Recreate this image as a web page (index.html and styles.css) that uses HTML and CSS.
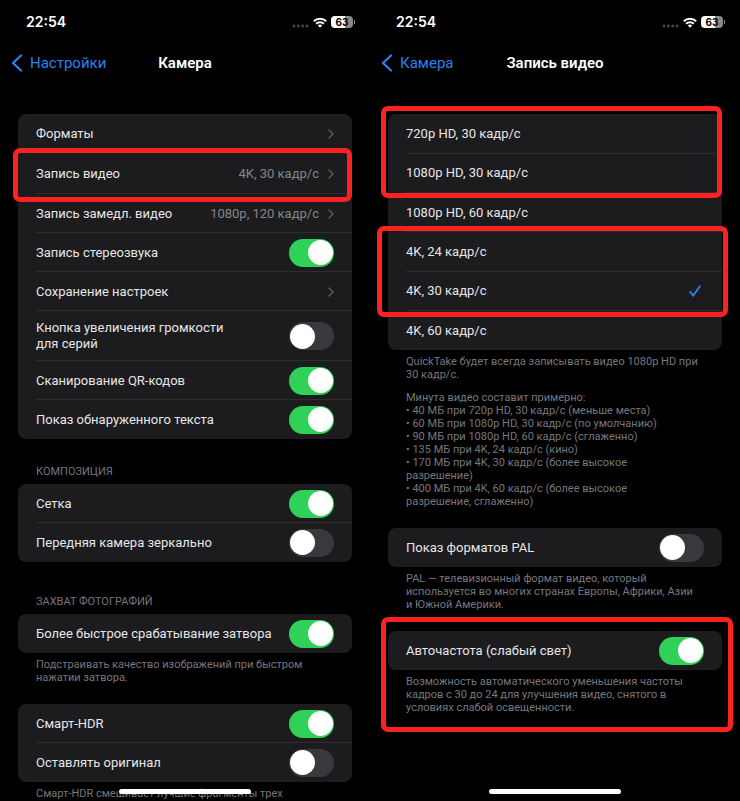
FILE: index.html
```html
<!doctype html>
<html lang="ru">
	<head>
		<title>Камера — Запись видео</title>
		<meta charset="utf-8">
		<meta name="viewport" content="width=device-width">
		<link rel="stylesheet" href="styles.css">
	</head>
	<body>
		<svg class="sprite" aria-hidden="true">
			<symbol id="back" viewBox="0 0 12 18">
				<path d="M10 1.500 2 9l8 7.500" fill="none" stroke="currentColor" stroke-width="2.200" stroke-linecap="round" stroke-linejoin="round"/>
			</symbol>
			<symbol id="chevron" viewBox="0 0 6 10">
				<path d="M1 1l4 4-4 4" fill="none" stroke="currentColor" stroke-width="1.500" stroke-linecap="round" stroke-linejoin="round"/>
			</symbol>
			<symbol id="check" viewBox="0 0 12 12">
				<path d="M1.200 6.800l3 4L10.800 1.200" fill="none" stroke="currentColor" stroke-width="1.900" stroke-linecap="round" stroke-linejoin="round"/>
			</symbol>
			<symbol id="dots" viewBox="0 0 17 4">
				<g fill="#4a4a4c">
					<circle cx="2" cy="2" r="1.400"/>
					<circle cx="6.300" cy="2" r="1.400"/>
					<circle cx="10.700" cy="2" r="1.400"/>
					<circle cx="15" cy="2" r="1.400"/>
				</g>
			</symbol>
			<symbol id="wifi" viewBox="0 0 14 11">
				<g fill="none" stroke="#fff" stroke-width="1.900">
					<path d="M.8 4.300a8.900 8.900 0 0 1 12.400 0"/>
					<path d="M3.100 6.800a5.600 5.600 0 0 1 7.800 0"/>
				</g>
				<path d="M7 10.700 4.800 8.500a3.100 3.100 0 0 1 4.400 0z" fill="#fff"/>
			</symbol>
		</svg>

		<main class="screens">
			<section class="screen">
				<div class="status">
					<time>22:54</time>
					<div class="status-icons">
						<svg class="dots"><use href="#dots"/></svg>
						<svg class="wifi"><use href="#wifi"/></svg>
						<span class="battery">63</span>
					</div>
				</div>
				<nav class="nav">
					<a class="back" href="#"><svg><use href="#back"/></svg>Настройки</a>
					<h1>Камера</h1>
				</nav>

				<div class="content">
					<div class="group">
						<div class="card card-main">
							<a class="row" href="#">Форматы <svg class="chevron"><use href="#chevron"/></svg></a>
							<div class="marked mark-video">
								<a class="row" href="#">Запись видео <span class="value">4K, 30 кадр/с</span><svg class="chevron"><use href="#chevron"/></svg></a>
							</div>
							<a class="row" href="#">Запись замедл. видео <span class="value">1080p, 120 кадр/с</span><svg class="chevron"><use href="#chevron"/></svg></a>
							<label class="row">Запись стереозвука <input class="switch" type="checkbox" checked></label>
							<a class="row" href="#">Сохранение настроек <svg class="chevron"><use href="#chevron"/></svg></a>
							<label class="row row-tall"><span>Кнопка увеличения громкости<br>для серий</span> <input class="switch" type="checkbox"></label>
							<label class="row">Сканирование QR-кодов <input class="switch" type="checkbox" checked></label>
							<label class="row">Показ обнаруженного текста <input class="switch" type="checkbox" checked></label>
						</div>
					</div>

					<div class="group">
						<h2>Композиция</h2>
						<div class="card">
							<label class="row">Сетка <input class="switch" type="checkbox" checked></label>
							<label class="row">Передняя камера зеркально <input class="switch" type="checkbox"></label>
						</div>
					</div>

					<div class="group group-photo">
						<h2>Захват фотографий</h2>
						<div class="card">
							<label class="row">Более быстрое срабатывание затвора <input class="switch" type="checkbox" checked></label>
						</div>
						<div class="note">
							<p>Подстраивать качество изображений при быстром<br>нажатии затвора.</p>
						</div>
					</div>

					<div class="group">
						<div class="card">
							<label class="row">Смарт-HDR <input class="switch" type="checkbox" checked></label>
							<label class="row">Оставлять оригинал <input class="switch" type="checkbox"></label>
						</div>
						<div class="note">
							<p>Смарт-HDR смешивает лучшие фрагменты трех</p>
						</div>
					</div>
				</div>
				<div class="home"></div>
			</section>

			<section class="screen">
				<div class="status">
					<time>22:54</time>
					<div class="status-icons">
						<svg class="dots"><use href="#dots"/></svg>
						<svg class="wifi"><use href="#wifi"/></svg>
						<span class="battery">63</span>
					</div>
				</div>
				<nav class="nav">
					<a class="back" href="#"><svg><use href="#back"/></svg>Камера</a>
					<h1>Запись видео</h1>
				</nav>

				<div class="content">
					<div class="group">
						<div class="card card-modes">
							<div class="marked mark-hd">
								<label class="row">720p HD, 30 кадр/с <input type="radio" name="mode"><svg class="check"><use href="#check"/></svg></label>
								<label class="row">1080p HD, 30 кадр/с <input type="radio" name="mode"><svg class="check"><use href="#check"/></svg></label>
							</div>
							<label class="row">1080p HD, 60 кадр/с <input type="radio" name="mode"><svg class="check"><use href="#check"/></svg></label>
							<div class="marked mark-4k">
								<label class="row">4K, 24 кадр/с <input type="radio" name="mode"><svg class="check"><use href="#check"/></svg></label>
								<label class="row">4K, 30 кадр/с <input type="radio" name="mode" checked><svg class="check"><use href="#check"/></svg></label>
							</div>
							<label class="row">4K, 60 кадр/с <input type="radio" name="mode"><svg class="check"><use href="#check"/></svg></label>
						</div>
						<div class="note">
							<p>QuickTake будет всегда записывать видео 1080p HD при<br>30 кадр/с.</p>
							<p>Минута видео составит примерно:</p>
							<ul>
								<li>• 40 МБ при 720p HD, 30 кадр/с (меньше места)</li>
								<li>• 60 МБ при 1080p HD, 30 кадр/с (по умолчанию)</li>
								<li>• 90 МБ при 1080p HD, 60 кадр/с (сглаженно)</li>
								<li>• 135 МБ при 4K, 24 кадр/с (кино)</li>
								<li>• 170 МБ при 4K, 30 кадр/с (более высокое<br>разрешение)</li>
								<li>• 400 МБ при 4K, 60 кадр/с (более высокое<br>разрешение, сглаженно)</li>
							</ul>
						</div>
					</div>

					<div class="group">
						<div class="card">
							<label class="row">Показ форматов PAL <input class="switch" type="checkbox"></label>
						</div>
						<div class="note">
							<p>PAL — телевизионный формат видео, который<br>используется во многих странах Европы, Африки, Азии<br>и Южной Америки.</p>
						</div>
					</div>

					<div class="group marked mark-auto">
						<div class="card">
							<label class="row">Авточастота (слабый свет) <input class="switch" type="checkbox" checked></label>
						</div>
						<div class="note">
							<p>Возможность автоматического уменьшения частоты<br>кадров с 30 до 24 для улучшения видео, снятого в<br>условиях слабой освещенности.</p>
						</div>
					</div>
				</div>
				<div class="home"></div>
			</section>
		</main>
	</body>
</html>
```
FILE: styles.css
```css
* {
	box-sizing: border-box;
}
html, body {
	margin: 0;
	padding: 0;
	background: #000;
}
body {
	font-family: Roboto, Inter, "Liberation Sans", sans-serif;
	font-size: 13px;
	line-height: 16px;
	color: #e6e6e8;
}
h1, h2, p, ul {
	margin: 0;
	padding: 0;
}
a {
	color: inherit;
	text-decoration: none;
}
.sprite {
	display: none;
}
.screens {
	display: grid;
	grid-template-columns: 1fr 1fr;
	min-height: 100vh;
}
.screen {
	position: relative;
	overflow: hidden;
}

/* status bar */
.status {
	display: flex;
	justify-content: space-between;
	align-items: center;
	height: 44px;
	padding: 0 17px 0 26px;
	color: #fff;
	font-family: Inter, sans-serif;
	font-size: 14px;
	font-weight: 600;
}
.status-icons {
	display: flex;
	align-items: center;
	gap: 4px;
}
.dots {
	width: 17px;
	height: 4px;
	margin-top: 7px;
}
.wifi {
	width: 14px;
	height: 11px;
}
.battery {
	position: relative;
	width: 22px;
	height: 12px;
	border-radius: 4px;
	background: linear-gradient(90deg, #fff 63%, #88888a 63%);
	color: #000;
	font-size: 10px;
	font-weight: 700;
	line-height: 12px;
	text-align: center;
}
.battery::after {
	content: "";
	position: absolute;
	top: 4px;
	right: -2px;
	width: 1px;
	height: 4px;
	background: #88888a;
}

/* navigation */
.nav {
	display: grid;
	grid-template-columns: 1fr auto 1fr;
	align-items: center;
	height: 38px;
	padding: 0 11px;
}
.nav h1 {
	color: #fff;
	font-size: 15px;
	font-weight: 600;
}
.back {
	display: flex;
	align-items: center;
	gap: 7px;
	color: #2b82f0;
	font-size: 15px;
}
.back svg {
	width: 12px;
	height: 18px;
}

/* lists */
.content {
	display: flex;
	flex-direction: column;
	gap: 20px;
	padding: 32px 18px 0;
}
.group h2 {
	padding: 6px 18px;
	color: #77777c;
	font-size: 11px;
	font-weight: 400;
	line-height: 13px;
	text-transform: uppercase;
}
.group-photo {
	margin-top: 7px;
}
.card {
	display: flex;
	flex-direction: column;
	border-radius: 8px;
	background: #1c1c1e;
}
.card-main {
	min-height: 325px;
}
.card-modes {
	min-height: 236px;
}
.row {
	display: flex;
	flex: 1 0 auto;
	align-items: center;
	min-height: 39px;
	margin-left: 18px;
	padding: 1px 18px 0 0;
	border-bottom: 1px solid #2d2d30;
}
.row-tall {
	min-height: 50px;
}
.card > .row:last-child {
	border-color: transparent;
}
.value {
	margin-left: auto;
	color: #858589;
}
.chevron {
	width: 6px;
	height: 10px;
	margin-left: auto;
	color: #5a5a5e;
}
.value + .chevron {
	margin-left: 9px;
}
.check {
	display: none;
	width: 12px;
	height: 12px;
	margin: 0 3px 0 auto;
	color: #2b82f0;
}
.row input {
	appearance: none;
	margin: 0;
}
.row input:checked + .check {
	display: block;
}
.row .switch {
	display: flex;
	flex: none;
	align-items: center;
	width: 45px;
	height: 28px;
	margin-left: auto;
	padding: 0 1px;
	border-radius: 14px;
	background: #39393d;
}
.switch::before {
	content: "";
	width: 25px;
	height: 25px;
	border-radius: 50%;
	background: #fff;
}
.row .switch:checked {
	background: #30d158;
}
.switch:checked::before {
	margin-left: auto;
}
.note {
	padding: 5px 18px 0;
	color: #77777c;
	font-size: 11px;
	line-height: 13px;
	white-space: nowrap;
}
.note p + p {
	margin-top: 10px;
}
.note ul {
	list-style: none;
}

/* red frames */
.marked {
	position: relative;
}
.card .marked {
	display: flex;
	flex-direction: column;
	flex: 1 0 auto;
}
.card-modes .marked {
	flex-grow: 2;
}
.marked::after {
	content: "";
	position: absolute;
	border: 5px solid #fc2222;
	border-radius: 7px;
	pointer-events: none;
}
.mark-video::after {
	inset: -5px 0 -8px -5px;
}
.mark-hd::after {
	inset: -8px 0 -5px -7px;
}
.mark-4k::after {
	inset: -6px -6px -6px -11px;
}
.mark-auto::after {
	inset: -14px -11px -18px -7px;
}

.home {
	position: absolute;
	bottom: 7px;
	left: 50%;
	width: 132px;
	height: 5px;
	margin-left: -66px;
	border-radius: 3px;
	background: #fff;
}
```
